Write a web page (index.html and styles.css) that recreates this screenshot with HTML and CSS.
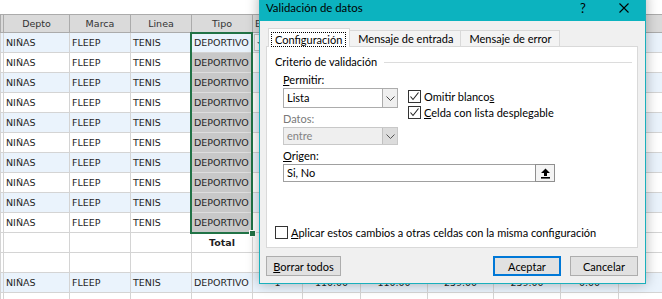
FILE: index.html
```html
<!DOCTYPE html>
<html lang="es">
<head>
    <meta charset="UTF-8">
    <meta name="viewport" content="width=device-width, initial-scale=1.0">
    <title>Validación de datos</title>
    <link rel="stylesheet" href="styles.css">
</head>
<body>
    <div class="sheet">
        <div class="top-strip"></div>
        <div class="grid-wrap">
            <table class="grid">
                <colgroup>
                    <col class="c-edge"><col class="c-depto"><col class="c-marca"><col class="c-linea"><col class="c-tipo"><col class="c-e">
                    <col class="c-f"><col class="c-g"><col class="c-h"><col class="c-i"><col class="c-j"><col class="c-k">
                </colgroup>
                <thead>
                    <tr><th></th><th>Depto</th><th>Marca</th><th>Linea</th><th>Tipo</th><th class="left">E</th><th></th><th></th><th></th><th></th><th></th><th></th></tr>
                </thead>
                <tbody>
                    <tr class="band"><td></td><td>NIÑAS</td><td>FLEEP</td><td>TENIS</td><td>DEPORTIVO</td><td class="dd-cell"><span class="dd-btn"></span></td><td></td><td></td><td></td><td></td><td></td><td></td></tr>
                    <tr><td></td><td>NIÑAS</td><td>FLEEP</td><td>TENIS</td><td class="sel">DEPORTIVO</td><td></td><td></td><td></td><td></td><td></td><td></td><td></td></tr>
                    <tr class="band"><td></td><td>NIÑAS</td><td>FLEEP</td><td>TENIS</td><td class="sel">DEPORTIVO</td><td></td><td></td><td></td><td></td><td></td><td></td><td></td></tr>
                    <tr><td></td><td>NIÑAS</td><td>FLEEP</td><td>TENIS</td><td class="sel">DEPORTIVO</td><td></td><td></td><td></td><td></td><td></td><td></td><td></td></tr>
                    <tr class="band"><td></td><td>NIÑAS</td><td>FLEEP</td><td>TENIS</td><td class="sel">DEPORTIVO</td><td></td><td></td><td></td><td></td><td></td><td></td><td></td></tr>
                    <tr><td></td><td>NIÑAS</td><td>FLEEP</td><td>TENIS</td><td class="sel">DEPORTIVO</td><td></td><td></td><td></td><td></td><td></td><td></td><td></td></tr>
                    <tr class="band"><td></td><td>NIÑAS</td><td>FLEEP</td><td>TENIS</td><td class="sel">DEPORTIVO</td><td></td><td></td><td></td><td></td><td></td><td></td><td></td></tr>
                    <tr><td></td><td>NIÑAS</td><td>FLEEP</td><td>TENIS</td><td class="sel">DEPORTIVO</td><td></td><td></td><td></td><td></td><td></td><td></td><td></td></tr>
                    <tr class="band"><td></td><td>NIÑAS</td><td>FLEEP</td><td>TENIS</td><td class="sel">DEPORTIVO</td><td></td><td></td><td></td><td></td><td></td><td></td><td></td></tr>
                    <tr><td></td><td>NIÑAS</td><td>FLEEP</td><td>TENIS</td><td class="sel">DEPORTIVO</td><td></td><td></td><td></td><td></td><td></td><td></td><td></td></tr>
                    <tr><td></td><td></td><td></td><td></td><td class="total">Total</td><td></td><td></td><td></td><td></td><td></td><td></td><td></td></tr>
                    <tr><td></td><td></td><td></td><td></td><td></td><td></td><td></td><td></td><td></td><td></td><td></td><td></td></tr>
                    <tr class="band"><td></td><td>NIÑAS</td><td>FLEEP</td><td>TENIS</td><td>DEPORTIVO</td><td class="num">1</td><td class="num">110.00</td><td class="num">110.00</td><td class="num">259.00</td><td class="num">259.00</td><td class="num">0.00</td><td></td></tr>
                    <tr><td></td><td></td><td></td><td></td><td></td><td></td><td></td><td></td><td></td><td></td><td></td><td></td></tr>
                </tbody>
            </table>
            <div class="selection"><span class="fill-handle"></span></div>
        </div>
    </div>

    <div class="dialog">
        <div class="dlg-title">
            <span class="dlg-caption">Validación de datos</span>
            <span class="dlg-help">?</span>
            <span class="dlg-close">
                <svg width="10" height="10" viewBox="0 0 10 10"><path d="M0.5 0.5 L9.5 9.5 M9.5 0.5 L0.5 9.5" stroke="#000" stroke-width="1.1" fill="none"/></svg>
            </span>
        </div>
        <div class="dlg-body">
            <div class="tabs">
                <div class="tab active"><span class="focus">Configuración</span></div>
                <div class="tab">Mensaje de entrada</div>
                <div class="tab">Mensaje de error</div>
            </div>
            <div class="panel">
                <div class="group-head"><span>Criterio de validación</span><span class="rule"></span></div>
                <div class="crit">
                    <div class="crit-left">
                        <label class="lbl"><u>P</u>ermitir:</label>
                        <div class="combo">
                            <span class="combo-text">Lista</span>
                            <span class="combo-btn"><svg width="9" height="5" viewBox="0 0 9 5"><polyline points="0.5,0.5 4.5,4.5 8.5,0.5" stroke="#444" fill="none"/></svg></span>
                        </div>
                        <label class="lbl is-disabled">Datos:</label>
                        <div class="combo combo-disabled">
                            <span class="combo-text">entre</span>
                            <span class="combo-btn"><svg width="9" height="5" viewBox="0 0 9 5"><polyline points="0.5,0.5 4.5,4.5 8.5,0.5" stroke="#555" fill="none"/></svg></span>
                        </div>
                    </div>
                    <div class="crit-right">
                        <div class="check-row">
                            <span class="chk"><svg width="11" height="11" viewBox="0 0 11 11"><polyline points="1.5,5.5 4,8.5 9.5,1.5" stroke="#222" stroke-width="1.1" fill="none"/></svg></span>
                            <span>Omitir blanco<u>s</u></span>
                        </div>
                        <div class="check-row">
                            <span class="chk"><svg width="11" height="11" viewBox="0 0 11 11"><polyline points="1.5,5.5 4,8.5 9.5,1.5" stroke="#222" stroke-width="1.1" fill="none"/></svg></span>
                            <span><u>C</u>elda con lista desplegable</span>
                        </div>
                    </div>
                </div>
                <label class="lbl origin-lbl"><u>O</u>rigen:</label>
                <div class="source">
                    <div class="source-input">Si, No</div>
                    <span class="source-btn">
                        <svg width="11" height="11" viewBox="0 0 11 11"><path d="M5.5 0.5 L10 5 H7 V8 H4 V5 H1 Z" fill="#000"/><rect x="1" y="9" width="9" height="1.6" fill="#000"/></svg>
                    </span>
                </div>
                <div class="check-row apply">
                    <span class="chk"></span>
                    <span><u>A</u>plicar estos cambios a otras celdas con la misma configuración</span>
                </div>
            </div>
            <div class="buttons">
                <button class="btn btn-clear"><u>B</u>orrar todos</button>
                <span class="spacer"></span>
                <button class="btn btn-default">Aceptar</button>
                <button class="btn">Cancelar</button>
            </div>
        </div>
    </div>
</body>
</html>
```

FILE: styles.css
```css
* {
    box-sizing: border-box;
}

body {
    margin: 0;
    width: 662px;
    height: 299px;
    overflow: hidden;
    position: relative;
    background: #fff;
    font-family: "DejaVu Sans", sans-serif;
}

/* Hoja de cálculo */
.top-strip {
    height: 14px;
    background: #fff;
}

.grid-wrap {
    position: relative;
}

.grid {
    border-collapse: collapse;
    table-layout: fixed;
    width: 678px;
    font-size: 9.5px;
    color: #1f1f1f;
}

.c-edge { width: 3px; }
.c-depto { width: 66px; }
.c-marca { width: 61px; }
.c-linea { width: 61px; }
.c-tipo { width: 61px; }
.c-e { width: 50px; }
.c-f { width: 58px; }
.c-g { width: 67px; }
.c-h { width: 66px; }
.c-i { width: 67px; }
.c-j { width: 58px; }
.c-k { width: 60px; }

.grid th {
    height: 18px;
    padding: 0;
    background: #dadada;
    border: 1px solid #ababab;
    font-weight: normal;
    color: #333;
    text-align: center;
}

.grid th.left {
    text-align: left;
    padding-left: 2px;
}

.grid td {
    height: 20px;
    padding: 0 2px;
    border: 1px solid #d4d4d4;
    background: #fff;
    white-space: nowrap;
    overflow: hidden;
}

.grid tr.band td {
    background: #eaf3fc;
}

.grid td.sel,
.grid tr.band td.sel {
    background: #c8c8c8;
    border-color: #dedede;
}

.grid td.num {
    text-align: center;
}

.grid td.total {
    font-weight: bold;
    text-align: center;
}

.grid td.dd-cell {
    padding: 0 0 0 1px;
}

.dd-btn {
    display: block;
    width: 11px;
    height: 17px;
    border: 1px solid #c6c6c6;
    background: #fff;
    position: relative;
}

.dd-btn::after {
    content: "";
    position: absolute;
    left: 2px;
    top: 7px;
    border-left: 3px solid transparent;
    border-right: 3px solid transparent;
    border-top: 3px solid #777;
}

.selection {
    position: absolute;
    left: 190px;
    top: 18px;
    width: 63px;
    height: 202px;
    border: 2px solid #217346;
    pointer-events: none;
}

.fill-handle {
    position: absolute;
    right: -5px;
    bottom: -5px;
    width: 7px;
    height: 7px;
    background: #217346;
    border: 1px solid #fff;
}

/* Diálogo */
.dialog {
    position: absolute;
    left: 259px;
    top: -8px;
    width: 387px;
    border: 1px solid #1ab0bc;
    background: #f0f0f0;
    box-shadow: 0 0 12px rgba(0, 0, 0, 0.3);
    font-family: Lato, "Liberation Sans", sans-serif;
    font-size: 11px;
    color: #000;
}

.dlg-title {
    height: 28px;
    padding: 7px 0 0 6px;
    background: #0cb3bf;
    display: flex;
    align-items: flex-start;
    line-height: 16px;
}

.dlg-caption {
    flex: 1;
    font-size: 11.4px;
}

.dlg-help {
    width: 20px;
    margin-right: 26px;
    text-align: center;
    font-size: 13px;
}

.dlg-close {
    width: 10px;
    height: 10px;
    margin: 3px 16px 0 0;
    display: flex;
}

.dlg-body {
    padding: 7px 7px 7px 6px;
}

.tabs {
    display: flex;
    align-items: flex-end;
    height: 19px;
    padding-left: 2px;
    margin-bottom: -1px;
    position: relative;
    z-index: 1;
}

.tab {
    height: 16px;
    margin-bottom: 1px;
    padding: 0 7px 0 8px;
    border: 1px solid #d9d9d9;
    border-bottom: none;
    background: #f3f3f3;
    line-height: 15px;
    white-space: nowrap;
}

.tab + .tab {
    margin-left: -1px;
}

.tab.active {
    height: 19px;
    margin-bottom: 0;
    padding: 3px 3px 0 2px;
    background: #fff;
    line-height: 13px;
}

.focus {
    display: inline-block;
    padding: 0 3px;
    border: 1px dotted #000;
}

.panel {
    height: 202px;
    padding: 7px 5px 7px 8px;
    background: #fff;
    border: 1px solid #d9d9d9;
    display: flex;
    flex-direction: column;
}

.group-head {
    display: flex;
    align-items: center;
    gap: 7px;
    height: 16px;
    line-height: 16px;
}

.rule {
    flex: 1;
    height: 1px;
    background: #dcdcdc;
}

.crit {
    display: flex;
    gap: 10px;
    margin: 2px 0 0 8px;
}

.crit-left {
    width: 115px;
}

.crit-right {
    padding-top: 16px;
}

.lbl {
    display: block;
    height: 16px;
    line-height: 16px;
}

.lbl.is-disabled {
    margin-top: 3px;
    color: #7a7a7a;
}

.combo {
    display: flex;
    height: 20px;
    border: 1px solid #acacac;
    background: #fff;
}

.combo-text {
    flex: 1;
    padding-left: 3px;
    line-height: 18px;
}

.combo-btn {
    width: 15px;
    border-left: 1px solid #acacac;
    background: #efefef;
    display: flex;
    align-items: center;
    justify-content: center;
}

.combo-disabled {
    height: 18px;
    border-color: #c8c8c8;
    background: #efefef;
    color: #838383;
}

.combo-disabled .combo-text {
    line-height: 16px;
}

.combo-disabled .combo-btn {
    border-left-color: #c0c0c0;
    background: #dcdcdc;
}

.check-row {
    display: flex;
    align-items: center;
    gap: 3px;
    height: 16px;
    white-space: nowrap;
}

.chk {
    width: 13px;
    height: 13px;
    border: 1px solid #333;
    background: #fff;
    display: flex;
    align-items: center;
    justify-content: center;
}

.origin-lbl {
    margin: 3px 0 0 8px;
}

.source {
    display: flex;
    width: 272px;
    height: 18px;
    margin-left: 8px;
}

.source-input {
    flex: 1;
    padding-left: 3px;
    border: 1px solid #a0a0a0;
    border-right: none;
    line-height: 16px;
}

.source-btn {
    width: 20px;
    border: 1px solid #8f8f8f;
    background: #f4f4f4;
    display: flex;
    align-items: center;
    justify-content: center;
}

.apply {
    margin-top: auto;
}

.buttons {
    display: flex;
    gap: 9px;
    margin-top: 8px;
    height: 20px;
}

.spacer {
    flex: 1;
}

.btn {
    height: 20px;
    width: 68px;
    padding: 0;
    border: 1px solid #adadad;
    background: #e1e1e1;
    font-family: Lato, "Liberation Sans", sans-serif;
    font-size: 11px;
    color: #000;
}

.btn-clear {
    width: 75px;
}

.btn-default {
    border-color: #0078d7;
    box-shadow: inset 0 0 0 1px #0078d7;
}
```
